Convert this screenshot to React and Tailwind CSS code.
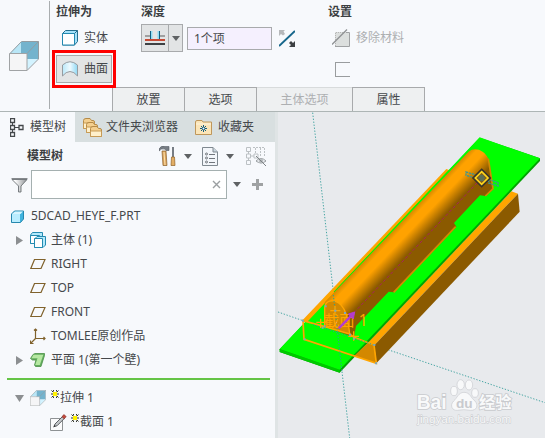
import React from "react";

function Caret() {
  return (
    <svg width="8" height="5" viewBox="0 0 8 5" aria-hidden="true">
      <path d="M0 0h8L4 5z" fill="#5f6264" />
    </svg>
  );
}

function ExtrudeIcon({ size }) {
  return (
    <svg width={size} height={size} viewBox="0 0 30 30" aria-hidden="true">
      <path d="M12 1h17v17H12z" fill="#74b3cd" />
      <path d="M1 12L12 1v11z" fill="#b9e6f6" />
      <path d="M18 29V18h11z" fill="#d3f3ff" />
      <path d="M1 12.500L12.500.5H29.500V18L18 29.500M18 12.500L29.500.5" fill="none" stroke="#949ca1" />
      <path d="M.5 12.500H18v17H.5z" fill="#f5f5f6" stroke="#a0a3a5" />
    </svg>
  );
}

function SolidIcon() {
  return (
    <svg width="16" height="16" viewBox="0 0 16 16" aria-hidden="true">
      <path d="M.5 3.500l3-3h12v11l-3 3.500h-12z" fill="#a5e2fa" stroke="#256f8e" />
      <path d="M.5 3.500h12v11.500H.5z" fill="#fff" stroke="#2389b0" />
      <path d="M12.500 3.500l3-3" stroke="#256f8e" />
    </svg>
  );
}

function SurfaceIcon() {
  return (
    <svg width="16" height="16" viewBox="0 0 16 16" aria-hidden="true">
      <defs>
        <linearGradient id="surf">
          <stop offset="0" stopColor="#b9e8f9" />
          <stop offset=".5" stopColor="#eefaff" />
          <stop offset="1" stopColor="#8fd8f4" />
        </linearGradient>
      </defs>
      <path d="M.5 4Q8-2.500 15.500 4v11Q12 10.500 8 10.500T.5 15z" fill="url(#surf)" stroke="#969ca1" />
    </svg>
  );
}

function DepthIcon() {
  return (
    <svg width="20" height="16" viewBox="0 0 20 16" aria-hidden="true">
      <path d="M0 6h5M15 6h5" stroke="#a0a0a0" strokeWidth="2" />
      <path d="M6.500 1v8M13.500 1v8" stroke="#8fdcf4" strokeWidth="2" />
      <path d="M5.500 1v8M14.500 1v8" stroke="#145f80" />
      <path d="M0 10h20" stroke="#c64a35" strokeWidth="2" />
      <path d="M0 14h20" stroke="#3e4144" strokeWidth="2" />
    </svg>
  );
}

function FlipIcon() {
  return (
    <svg width="16" height="17" viewBox="0 0 16 17" aria-hidden="true">
      <path d="M0 16L16 1" stroke="#16668b" strokeWidth="2" />
      <path d="M0 0h6L4.500 1.500 6 4 4 5.500 2 4 0 6z" fill="#b6b8ba" />
      <path d="M16 17h-6l2-2-2-2 2-2 2 2 2-2z" fill="#3c4043" />
    </svg>
  );
}

function RemoveIcon() {
  return (
    <svg width="18" height="18" viewBox="0 0 18 18" aria-hidden="true">
      <path d="M3 3h14v14H3z" fill="#dcdfde" />
      <path d="M3.500 17V3.500H14" fill="none" stroke="#b5b5b5" strokeDasharray="1 1" />
      <path d="M14 3.500h3.500v14H3" fill="none" stroke="#9fa1a3" />
      <path d="M0 15.500L15 .5" stroke="#8f9294" strokeWidth="1.300" />
    </svg>
  );
}

function TreeIcon() {
  return (
    <svg width="14" height="19" viewBox="0 0 14 19" fill="none" stroke="#44484b" aria-hidden="true">
      <path d="M2.500 5v2M2.500 12v2M5 9.500h4" />
      <path d="M.5.5h4v4h-4zM.5 7.500h4v4h-4zM.5 14.500h4v4h-4zM9 7.500h4v4H9z" strokeWidth="1.300" />
    </svg>
  );
}

function FolderShape({ x, y }) {
  return (
    <g transform={`translate(${x} ${y})`}>
      <path d="M.5 10.500V2.500Q.5.5 3 .5h4l1.500 2H10q1.500 0 1.500 1.500v6.500z" fill="#f4cf8e" stroke="#b58a48" />
      <path d="M.5 5h11v5.500H.5z" fill="#fff0cb" stroke="#c79b56" />
    </g>
  );
}

function FoldersIcon() {
  return (
    <svg width="19" height="19" viewBox="0 0 19 19" aria-hidden="true">
      <FolderShape x={0} y={0} />
      <FolderShape x={3} y={4} />
      <FolderShape x={7} y={8} />
    </svg>
  );
}

function FavoriteIcon() {
  return (
    <svg width="17" height="16" viewBox="0 0 17 16" aria-hidden="true">
      <path d="M.5 15.500V3Q.5 1.500 2 1.500h5l1 1.500h8.500v12.500z" fill="#fbe5b8" stroke="#bf975b" />
      <path d="M1 5h15" stroke="#fff4dc" />
      <path d="M8.500 6v7M5 9.500h7M6 7l5 5M11 7l-5 5" stroke="#145d7f" />
      <circle cx="8.500" cy="9.500" r="1" fill="#fff" />
    </svg>
  );
}

function ToolsIcon() {
  return (
    <svg width="17" height="20" viewBox="0 0 17 20" aria-hidden="true">
      <path d="M0 3Q2-1 6 .5h4v4H7L6 3Q2 2 0 5z" fill="#777d84" stroke="#585e65" strokeWidth=".6" />
      <path d="M3 5h4l1 14.500H4z" fill="#dca660" stroke="#8b6029" strokeWidth=".7" />
      <path d="M5 6l1 13" stroke="#ffe2ac" />
      <path d="M14 1v10" stroke="#777d84" strokeWidth="2" />
      <path d="M12.500 11h3l.5 8.500h-4z" fill="#e2ae65" stroke="#916329" strokeWidth=".7" />
    </svg>
  );
}

function ListIcon() {
  return (
    <svg width="16" height="19" viewBox="0 0 16 19" aria-hidden="true">
      <path d="M.5.5H11L15.500 5v13.500H.5z" fill="#f3f6fa" stroke="#808990" />
      <path d="M11 .5V5h4.500" fill="#cbd6df" stroke="#808990" />
      <g fill="none" stroke="#62686d" strokeWidth=".9">
        <circle cx="4.500" cy="7" r="1" /><circle cx="4.500" cy="11" r="1" /><circle cx="4.500" cy="15" r="1" />
        <path d="M7 7.500h6M7 11.500h6M7 15.500h6" />
      </g>
    </svg>
  );
}

function HiddenTreeIcon() {
  return (
    <svg width="21" height="20" viewBox="0 0 21 20" fill="none" stroke="#bcc1c4" aria-hidden="true">
      <path d="M.5 1.500h4v4h-4zM.5 8h4v4h-4zM.5 14.500h4v4h-4zM8 8h4v4H8zM4.500 10H8M2.500 5.500V8M2.500 12v2.500" />
      <path d="M7 1.500h12M9.500 2v5M14.500 2v9M18.500 2v9" strokeDasharray="2 1" />
      <path d="M10 15q5-5 10 0-5 4-10 0z" stroke="#969b9e" />
      <circle cx="15" cy="15" r="2" fill="#aeb3b5" />
      <path d="M10 10l10 10" stroke="#7e8386" />
    </svg>
  );
}

function FilterIcon() {
  return (
    <svg width="17" height="16" viewBox="0 0 17 16" aria-hidden="true">
      <defs>
        <linearGradient id="fun">
          <stop offset=".2" stopColor="#fff" />
          <stop offset="1" stopColor="#8d9195" />
        </linearGradient>
      </defs>
      <path d="M1 2.500h15L10 9v6H7.500V9z" fill="url(#fun)" stroke="#6a6f73" strokeWidth=".9" />
      <path d="M.5 1.500h16" stroke="#85898c" />
    </svg>
  );
}

function PartIcon() {
  return (
    <svg width="13" height="13" viewBox="0 0 13 13" aria-hidden="true">
      <path d="M.5 4l3-3h9v8l-3 3.500h-9z" fill="#41b4de" stroke="#2688ae" />
      <path d="M1 4h8v8H1z" fill="#b9edff" />
      <path d="M1 4l3-2.500h8L9.500 4z" fill="#d7f5ff" />
    </svg>
  );
}

function BodiesIcon() {
  return (
    <svg width="16" height="16" viewBox="0 0 16 16" fill="#fff" stroke="#248bb1" aria-hidden="true">
      <path d="M.5 3l2-2.500h10v8l-2 3H.5z" fill="#b4e9fc" />
      <path d="M.5 3.500h9v8h-9z" />
      <path d="M4.500 7L7 4.500h8.500V13L13 15.500H4.500z" fill="#b4e9fc" />
      <path d="M4.500 6.500h8v9h-8z" />
    </svg>
  );
}

function PlaneIcon() {
  return (
    <svg width="16" height="10" viewBox="0 0 16 10" aria-hidden="true">
      <path d="M4.500.5H15l-4 9H.8z" fill="none" stroke="#80622c" strokeWidth="1.200" />
    </svg>
  );
}

function CsysIcon() {
  return (
    <svg width="16" height="16" viewBox="0 0 16 16" fill="none" stroke="#80622c" aria-hidden="true">
      <path d="M5.500 1v9.500H15M5.500 10.500L1 15M4 2.500l1.500-1.500L7 2.500M13.500 9l1.500 1.500-1.500 1.500M.5 12.500v3H3.500" strokeWidth="1.200" />
    </svg>
  );
}

function WallIcon() {
  return (
    <svg width="15" height="14" viewBox="0 0 15 14" aria-hidden="true">
      <path d="M3 1.500L5 .5h9.500v2L11 13.500H5.500L4.500 12l1.500-5H2.500L.5 5.500z" fill="#63ad5e" stroke="#4b9048" strokeWidth=".8" />
      <path d="M3.500 1.800h9.800L9.800 12H5.200L7.500 5.200H1.400z" fill="#b6e8a2" />
    </svg>
  );
}

function SketchIcon() {
  return (
    <svg width="17" height="17" viewBox="0 0 17 17" aria-hidden="true">
      <path d="M.5 4.500h12v12H.5z" fill="#fbfbfc" stroke="#8e9294" />
      <path d="M4 12.500l1-2.500 7.500-7.500 2 1.800-7.500 7.500z" fill="#c4c7ca" stroke="#4c5053" strokeWidth=".9" />
      <path d="M12 2.800l1.800-2.200 2.400 2-2 2.200z" fill="#c54b3d" stroke="#8b302b" strokeWidth=".7" />
      <path d="M3.200 13.500l1.200-2.500 1.200 1.300z" fill="#333" />
    </svg>
  );
}

function NewStar() {
  return (
    <svg width="8" height="8" viewBox="0 0 8 8" aria-hidden="true">
      <path d="M2.500 0v1.500M5.500 0v1.500M2.500 6.500V8M5.500 6.500V8M0 4h8M.5.5l7 7M7.500.5l-7 7" stroke="#33352a" />
      <path d="M2 2h4v4H2z" fill="#fff200" />
    </svg>
  );
}

function PawIcon() {
  return (
    <g fill="#f8f9fa" stroke="#c8cace" strokeWidth="2">
      <ellipse cx="528" cy="843" rx="10" ry="14" />
      <ellipse cx="548" cy="824" rx="11" ry="15" />
      <ellipse cx="573" cy="825" rx="11" ry="15" />
      <ellipse cx="591" cy="849" rx="10" ry="13" />
      <path d="M558 847C541 847 538 864 527 873C514 886 523 903 538 901Q558 897 577 901C597 902 602 886 591 873C578 864 577 847 558 847z" />
    </g>
  );
}

function Viewport() {
  return (
    <svg
      className="block w-full"
      viewBox="0 6 801 978"
      role="img"
      aria-label="3D"
      fontFamily="'Noto Sans', 'Noto Sans CJK SC', sans-serif"
    >
      <defs>
        <linearGradient id="tube" gradientUnits="userSpaceOnUse" x1="357" y1="350" x2="437" y2="426">
          <stop offset="0" stopColor="#d58a00" />
          <stop offset=".14" stopColor="#ffa200" />
          <stop offset=".34" stopColor="#ffa200" />
          <stop offset=".72" stopColor="#8b5a00" />
          <stop offset="1" stopColor="#8b5a00" />
        </linearGradient>
      </defs>
      <g stroke="#46a5a3" strokeWidth="3" strokeDasharray="4 5">
        <path d="M104 8L166 545" />
        <path d="M0 606L75 632" />
        <path d="M288 705L801 878" />
        <path d="M192 785L215 984" />
      </g>
      <path d="M72 632L505 177L520 183L110 650z" fill="#ffa500" />
      <path d="M232 737L700 244L720 251L289 706L295 760z" fill="#ffa500" />
      <path d="M289 706L720 251L725 305L295 760z" fill="#8b5a00" />
      <path d="M5 718L605 83L786 145V153L185 788L5 726z" fill="#00a400" />
      <path d="M5 718L185 779V788L5 726z" fill="#00c900" />
      <path d="M5 717L605 82L786 145L185 779z" fill="#0f0" />
      <path d="M75 632L162 541L170 548L88 635z" fill="#ffa500" />
      <path
        d="M140 577L573 124C590 110 619 119 631 146L645 236L622 258L606 256L528 339L535 350L347 547L332 545L234 648L228 682L140 650z"
        fill="url(#tube)"
      />
      <path d="M631 146L645 236L622 258M533 350L347 547" fill="none" stroke="#d18a00" strokeWidth="5" />
      <path d="M140 650V592C144 568 171 567 188 584C202 599 209 615 215 672z" fill="#d28800" stroke="#ffa500" strokeWidth="4" />
      <path d="M270 698L288 705L295 760L228 738z" fill="#d38800" />
      <path d="M140 650L75 632L78 688L295 760L288 705L228 682L215 672" fill="none" stroke="#ffa500" strokeWidth="5" />
      <g stroke="#2ba09b" strokeWidth="3" strokeDasharray="4 5" fill="none">
        <path d="M166 555L192 785" />
        <path d="M105 643L288 705" />
      </g>
      <g stroke="#ffa500" strokeWidth="4">
        <path d="M157 602h30M171 588v28M115 637h28M128 626v28M211 679h32M227 664v28" />
      </g>
      <g fill="#7fa7b9">
        <path d="M72 629h6v6h-6zM140 586h6v6h-6zM169 599h6v6h-6zM198 606h6v6h-6zM77 685h6v6h-6zM138 646h6v6h-6zM225 683h6v6h-6zM286 702h6v6h-6zM291 757h6v6h-6zM131 650h6v6h-6zM213 671h6v6h-6z" />
      </g>
      <path d="M228 608L610 205" stroke="#a81f60" strokeWidth="3" strokeDasharray="9 7" />
      <text x="138" y="648" fontSize="46" fill="#ffa500">截面 1</text>
      <path d="M182 655L218 619" stroke="#b43bd0" strokeWidth="7" />
      <path d="M230 606l-4 21-15-15z" fill="#b43bd0" stroke="#b43bd0" strokeWidth="3" />
      <path d="M564 186l30 9v10l-30-9zM632 208l28 10v10l-28-9z" fill="none" stroke="#3f9590" strokeWidth="4" strokeDasharray="7 2" />
      <path d="M611 183L632 204L611 225L590 204z" fill="#946000" stroke="#3b3528" strokeWidth="12" />
      <path d="M611 185L630 204L611 223L592 204z" fill="#80601c" stroke="#ffd51c" strokeWidth="5" />
      <path d="M602 204h18M606 210h12M605 198h12" stroke="#50746b" strokeWidth="4" />
      <g fill="#f8f9fa" stroke="#c8cace" strokeWidth="5" paintOrder="stroke">
        <text x="416" y="897" fontSize="58" fontWeight="700" fontFamily="'Liberation Sans', sans-serif">Bai</text>
        <text x="603" y="893" fontSize="49" fontWeight="700">经验</text>
        <text x="418" y="938" fontSize="35" strokeWidth="3" fontFamily="'Liberation Sans', sans-serif">jingyan.baidu.com</text>
      </g>
      <PawIcon />
      <text x="534" y="893" fontSize="41" fontWeight="700" fontFamily="'Liberation Sans', sans-serif" fill="#c8cace">du</text>
    </svg>
  );
}

const pageTabs = [
  { label: "放置", width: "w-[73px]" },
  { label: "选项", width: "w-[73px]" },
  { label: "主体选项", width: "w-[97px]", disabled: true },
  { label: "属性", width: "w-[73px]" },
];

function Ribbon() {
  return (
    <header className="flex border-b border-[#adb5b5]">
      <div className="flex w-12 shrink-0 items-center justify-center">
        <button aria-label="拉伸"><ExtrudeIcon size={30} /></button>
      </div>
      <div className="mt-px mb-0.5 ml-px w-px bg-[#a9adaf]" />
      <div className="min-w-0 flex-1 pl-1.5">
        <div className="flex">
          <section className="w-[85px] shrink-0 pt-1">
            <h2 className="h-4 leading-4 font-bold">拉伸为</h2>
            <button className="mt-1 flex h-7 w-14 items-center gap-1.5 pl-1.5 whitespace-nowrap">
              <SolidIcon />实体
            </button>
            <div className="relative mt-[3px] w-14">
              <button aria-pressed="true" className="flex h-7 w-14 items-center gap-1.5 border border-[#a8aaac] bg-[#e2e4e5] pl-[5px] whitespace-nowrap">
                <SurfaceIcon />曲面
              </button>
              <div className="pointer-events-none absolute -inset-x-1 -inset-y-[5px] z-10 border-[3px] border-[#fe0000]" />
            </div>
          </section>
          <section className="w-[187px] shrink-0 pt-1">
            <h2 className="h-4 leading-4 font-bold">深度</h2>
            <div className="mt-1 flex h-7 items-center">
              <div className="flex h-7 w-[42px] border border-[#a8aaac] bg-[#e2e4e5]">
                <button aria-label="深度选项" className="flex flex-1 items-center justify-center"><DepthIcon /></button>
                <button aria-label="更多深度选项" className="flex w-3.5 items-center justify-center border-l border-[#a8aaac]"><Caret /></button>
              </div>
              <input aria-label="深度值" defaultValue="1个项" className="ml-1 h-[23px] w-[85px] border border-[#a8aaac] bg-[#f5f0fe] px-1.5 outline-none" />
              <button aria-label="反向" className="ml-[7px]"><FlipIcon /></button>
            </div>
          </section>
          <section className="pt-1">
            <h2 className="h-4 leading-4 font-bold">设置</h2>
            <button disabled className="mt-1 flex h-7 items-center gap-1.5 pl-1 whitespace-nowrap text-[#adafb1]">
              <RemoveIcon />移除材料
            </button>
            <div className="mt-[3px] flex h-7 items-center pl-[7px]">
              <input type="checkbox" aria-label="加厚草绘" className="size-[15px] appearance-none border border-r-0 border-[#999c9e]" />
            </div>
          </section>
        </div>
        <nav className="mt-1 ml-14 flex">
          {pageTabs.map((t) => (
            <button
              key={t.label}
              disabled={t.disabled}
              className={`${t.width} -mr-px h-6 border border-b-0 bg-[#eef0f1] whitespace-nowrap ${t.disabled ? "border-[#d8dbdc] text-[#adafb1]" : "relative border-[#a8aaac]"}`}
            >
              {t.label}
            </button>
          ))}
        </nav>
      </div>
    </header>
  );
}

const treeRows = [
  { label: "主体 (1)", icon: <BodiesIcon />, arrow: "right" },
  { label: "RIGHT", icon: <PlaneIcon /> },
  { label: "TOP", icon: <PlaneIcon /> },
  { label: "FRONT", icon: <PlaneIcon /> },
  { label: "TOMLEE原创作品", icon: <CsysIcon /> },
  { label: "平面 1(第一个壁)", icon: <WallIcon />, arrow: "right" },
];

function Arrow({ kind }) {
  return (
    <svg width="9" height="9" viewBox="0 0 9 9" fill="#8c8f91" aria-hidden="true">
      {kind === "right" && <path d="M1 0v9l7-4.500z" />}
      {kind === "down" && <path d="M0 1h9L4.500 8z" />}
    </svg>
  );
}

function TreeRow({ row }) {
  return (
    <li className="flex h-6 items-center pl-[15px] whitespace-nowrap">
      <Arrow kind={row.arrow} />
      <span className="ml-1.5 flex w-[21px]">{row.icon}</span>
      {row.isNew && <span className="mr-px -mt-2"><NewStar /></span>}
      {row.label}
    </li>
  );
}

function Navigator() {
  return (
    <aside className="w-[278px] shrink-0 border-r-[3px] border-[#dfe4e5] bg-[#f7f9fc]">
      <nav className="flex h-[30px] bg-[#d8dfe0] whitespace-nowrap">
        <button className="flex w-[75px] items-center gap-1.5 bg-[#f7f9fc] pl-2.5"><TreeIcon />模型树</button>
        <button className="flex w-[113px] items-center gap-1 pl-2"><FoldersIcon />文件夹浏览器</button>
        <button className="flex items-center gap-1.5 pl-[7px]"><FavoriteIcon />收藏夹</button>
      </nav>
      <div className="flex h-7 items-center pr-2 pl-[27px]">
        <h2 className="flex-1 font-bold">模型树</h2>
        <button aria-label="设置" className="flex items-center gap-2"><ToolsIcon /><Caret /></button>
        <button aria-label="显示" className="ml-2.5 flex items-center gap-2"><ListIcon /><Caret /></button>
        <button aria-label="隐藏项" className="ml-3"><HiddenTreeIcon /></button>
      </div>
      <div className="flex h-[29px] items-center pr-3 pl-[11px]">
        <FilterIcon />
        <div className="ml-[3px] flex h-full flex-1 items-center border border-[#a5b0b0] bg-white pr-[5px]">
          <input aria-label="过滤" className="h-full w-0 flex-1 px-1 outline-none" />
          <button aria-label="清除">
            <svg width="9" height="9" viewBox="0 0 9 9" stroke="#9b9fa1" strokeWidth="1.400"><path d="M1 1l7 7M8 1L1 8" /></svg>
          </button>
        </div>
        <button aria-label="过滤选项" className="ml-1.5"><Caret /></button>
        <button aria-label="添加" className="ml-[11px]">
          <svg width="11" height="11" viewBox="0 0 11 11" stroke="#9fa2a3" strokeWidth="3"><path d="M5.500 0v11M0 5.500h11" /></svg>
        </button>
      </div>
      <ul className="mt-[5px]">
        <li className="flex h-6 items-center gap-[7px] pl-[11px]"><PartIcon />5DCAD_HEYE_F.PRT</li>
        {treeRows.map((r) => <TreeRow key={r.label} row={r} />)}
      </ul>
      <div className="mt-1.5 mr-[5px] mb-1.5 ml-[7px] h-0.5 bg-[#65c446]" />
      <ul>
        <TreeRow row={{ label: "拉伸 1", icon: <ExtrudeIcon size={16} />, arrow: "down", isNew: true }} />
        <li className="flex h-6 items-center pl-[50px] whitespace-nowrap">
          <span className="flex w-[21px]"><SketchIcon /></span>
          <span className="mr-px -mt-2"><NewStar /></span>
          截面 1
        </li>
      </ul>
    </aside>
  );
}

export default function App() {
  return (
    <div className="flex min-h-screen flex-col overflow-hidden bg-[#f7f9fc] font-['Noto_Sans','Noto_Sans_CJK_SC',sans-serif] text-xs text-[#45484b] [&_button]:leading-4 [&_h2]:text-[#3c3f42]">
      <Ribbon />
      <div className="flex flex-1">
        <Navigator />
        <main className="min-w-0 flex-1 bg-[#e8eaed]"><Viewport /></main>
      </div>
    </div>
  );
}
